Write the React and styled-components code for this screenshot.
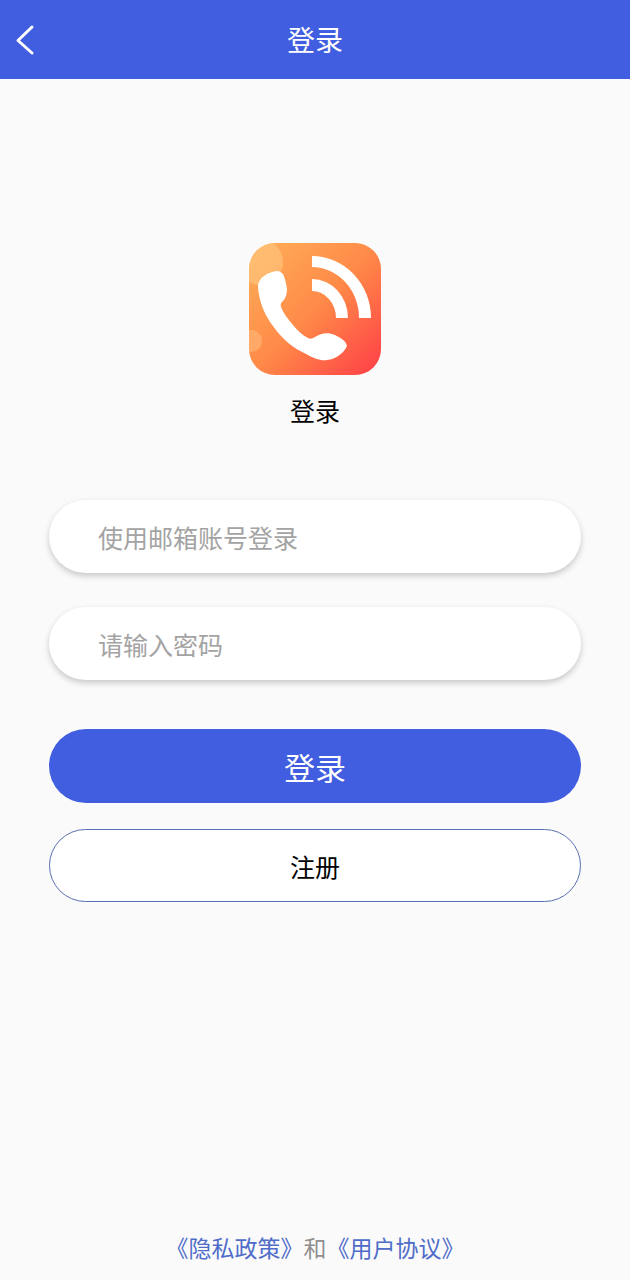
import React from "react";
import styled, { createGlobalStyle } from "styled-components";

const GlobalStyle = createGlobalStyle`
  html, body {
    margin: 0;
    padding: 0;
    background-color: #fafafa;
  }

  * {
    box-sizing: border-box;
  }
`;

const Page = styled.div`
  display: flex;
  flex-direction: column;
  width: 630px;
  height: 1280px;
  background-color: #fafafa;
  font-family: "Noto Sans CJK SC", "Noto Sans", sans-serif;
`;

const Header = styled.header`
  display: grid;
  grid-template-columns: 60px 1fr 60px;
  align-items: center;
  height: 79px;
  background-color: #415ee0;
  color: white;
`;

const BackButton = styled.button`
  display: flex;
  align-items: center;
  width: 60px;
  height: 79px;
  padding: 0 0 0 15px;
  border: none;
  background: none;
  color: white;
`;

const Title = styled.h1`
  margin: 0;
  font-size: 28px;
  font-weight: 400;
  line-height: 79px;
  text-align: center;
`;

const LogoBlock = styled.div`
  display: flex;
  flex-direction: column;
  align-items: center;
  padding-top: 164px;
`;

const LogoLabel = styled.div`
  margin-top: 17px;
  font-size: 25px;
  line-height: 36px;
  color: #000;
`;

const Form = styled.form`
  display: flex;
  flex-direction: column;
  margin-top: 72px;
  padding: 0 49px;
`;

const Input = styled.input`
  width: 100%;
  height: 73px;
  margin-bottom: 34px;
  padding: 0 49px;
  border: none;
  border-radius: 37px;
  outline: none;
  background-color: white;
  box-shadow: 0 3px 6px rgba(0, 0, 0, 0.2);
  font-family: inherit;
  font-size: 25px;

  &::placeholder {
    color: #a3a3a3;
    opacity: 1;
  }
`;

const LoginButton = styled.button`
  height: 74px;
  margin-top: 15px;
  border: none;
  border-radius: 37px;
  background-color: #415ee0;
  color: white;
  font-family: inherit;
  font-size: 31px;
`;

const RegisterButton = styled.button`
  height: 73px;
  margin-top: 26px;
  border: 1px solid #5a6fb0;
  border-radius: 37px;
  background-color: white;
  color: #000;
  font-family: inherit;
  font-size: 25px;
`;

const Footer = styled.footer`
  margin-top: auto;
  padding-bottom: 16px;
  font-size: 23px;
  line-height: 34px;
  text-align: center;
  color: #8f8f8f;
`;

const FooterLink = styled.a`
  color: #4f6cc9;
`;

function BackIcon() {
  return (
    <svg width="20" height="32" viewBox="0 0 20 32" fill="none">
      <path
        d="M17 3 L3 16.5 L17 29"
        stroke="currentColor"
        strokeWidth="3"
        strokeLinecap="round"
        strokeLinejoin="round"
      />
    </svg>
  );
}

function AppLogo() {
  return (
    <svg width="132" height="132" viewBox="0 0 132 132">
      <defs>
        <linearGradient id="logoBg" x1="0" y1="0" x2="1" y2="1">
          <stop offset="0" stopColor="#ffb05a" />
          <stop offset="0.5" stopColor="#ff8a48" />
          <stop offset="1" stopColor="#ff3d47" />
        </linearGradient>
        <clipPath id="logoClip">
          <rect width="132" height="132" rx="26" />
        </clipPath>
      </defs>
      <g clipPath="url(#logoClip)">
        <rect width="132" height="132" fill="url(#logoBg)" />
        <circle cx="11" cy="19" r="23" fill="#ffd08a" opacity="0.5" />
        <circle cx="2" cy="98" r="11" fill="#ffc58a" opacity="0.45" />
      </g>
      <path
        d="M28 28 C20 29 9 34 9 44 C10 60 17 74 24 83 C33 96 44 105 57 111 C66 116 72 118 78 117 C87 116 95 110 98 103 C97 98 92 95 86 92 C79 89 72 90 66 94 C63 96 61 96 59 95 C53 92 48 87 44 82 C39 76 34 70 32 64 C31 61 32 60 34 58 C37 55 38 50 38 46 C37 40 36 35 34 31 C32 29 30 28 28 28 Z"
        fill="white"
      />
      <path
        d="M63 13 A59 62 0 0 1 122 75 L110 75 A47 51 0 0 0 63 24 Z"
        fill="white"
      />
      <path
        d="M63 36 A36 39 0 0 1 99 75 L87 75 A24 27 0 0 0 63 48 Z"
        fill="white"
      />
    </svg>
  );
}

export default function App() {
  return (
    <Page>
      <GlobalStyle />
      <Header>
        <BackButton type="button" aria-label="返回">
          <BackIcon />
        </BackButton>
        <Title>登录</Title>
      </Header>
      <LogoBlock>
        <AppLogo />
        <LogoLabel>登录</LogoLabel>
      </LogoBlock>
      <Form>
        <Input type="text" placeholder="使用邮箱账号登录" />
        <Input type="password" placeholder="请输入密码" />
        <LoginButton type="button">登录</LoginButton>
        <RegisterButton type="button">注册</RegisterButton>
      </Form>
      <Footer>
        <FooterLink>《隐私政策》</FooterLink>和<FooterLink>《用户协议》</FooterLink>
      </Footer>
    </Page>
  );
}
